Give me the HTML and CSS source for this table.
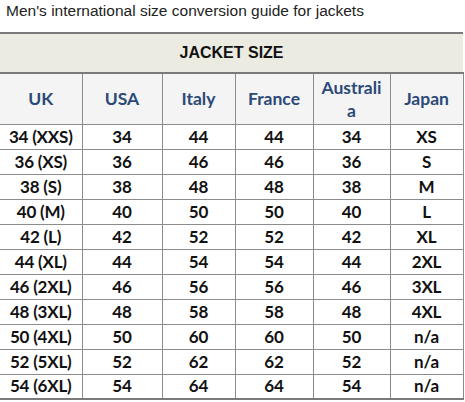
FILE: index.html
```html
<!DOCTYPE html>
<html>
<head>
<meta charset="utf-8">
<link rel="stylesheet" href="styles.css">
</head>
<body>
<p class="title">Men's international size conversion guide for jackets</p>
<table class="size-table">
  <colgroup>
    <col class="c1"><col class="c2"><col class="c3"><col class="c4"><col class="c5"><col class="c6">
  </colgroup>
  <thead>
    <tr class="head-main"><th colspan="6">JACKET SIZE</th></tr>
    <tr class="head-cols">
      <th>UK</th><th>USA</th><th>Italy</th><th>France</th><th>Australi<br>a</th><th>Japan</th>
    </tr>
  </thead>
  <tbody>
    <tr><td>34 (XXS)</td><td>34</td><td>44</td><td>44</td><td>34</td><td>XS</td></tr>
    <tr><td>36 (XS)</td><td>36</td><td>46</td><td>46</td><td>36</td><td>S</td></tr>
    <tr><td>38 (S)</td><td>38</td><td>48</td><td>48</td><td>38</td><td>M</td></tr>
    <tr><td>40 (M)</td><td>40</td><td>50</td><td>50</td><td>40</td><td>L</td></tr>
    <tr><td>42 (L)</td><td>42</td><td>52</td><td>52</td><td>42</td><td>XL</td></tr>
    <tr><td>44 (XL)</td><td>44</td><td>54</td><td>54</td><td>44</td><td>2XL</td></tr>
    <tr><td>46 (2XL)</td><td>46</td><td>56</td><td>56</td><td>46</td><td>3XL</td></tr>
    <tr><td>48 (3XL)</td><td>48</td><td>58</td><td>58</td><td>48</td><td>4XL</td></tr>
    <tr><td>50 (4XL)</td><td>50</td><td>60</td><td>60</td><td>50</td><td>n/a</td></tr>
    <tr><td>52 (5XL)</td><td>52</td><td>62</td><td>62</td><td>52</td><td>n/a</td></tr>
    <tr><td>54 (6XL)</td><td>54</td><td>64</td><td>64</td><td>54</td><td>n/a</td></tr>
  </tbody>
</table>
</body>
</html>
```
FILE: styles.css
```css
html, body {
  margin: 0;
  padding: 0;
  background: #ffffff;
}
.title {
  margin: 0;
  padding: 2px 0 0 6px;
  height: 29px;
  box-sizing: border-box;
  font-family: "Liberation Sans", Arial, sans-serif;
  font-size: 15.5px;
  color: #222222;
}
.size-table {
  border-collapse: collapse;
  table-layout: fixed;
  width: 463px;
  margin-top: 3px;
  font-family: Lato, "Open Sans", sans-serif;
  font-weight: bold;
  color: #111111;
}
.c1 { width: 82px; }
.c2 { width: 80px; }
.c3 { width: 73px; }
.c4 { width: 78px; }
.c5 { width: 77px; }
.c6 { width: 73px; }
.size-table th,
.size-table td {
  padding: 0;
  text-align: center;
  border: 1px solid #8c8c8c;
  box-sizing: border-box;
}
.head-main th {
  height: 40px;
  background: #ecebe2;
  border-top: 2px solid #7a7a7a;
  border-bottom: 2px solid #7a7a7a;
  border-left: 0;
  border-right: 0;
  font-family: "Liberation Sans", Arial, sans-serif;
  font-size: 16px;
  color: #111111;
}
.head-cols th {
  height: 51px;
  background: #f4f4f4;
  color: #2b4a78;
  font-size: 17.5px;
  line-height: 23px;
}
.size-table tbody td {
  height: 25px;
  font-size: 17px;
  line-height: 20px;
  letter-spacing: -0.2px;
}
.size-table tr > :first-child {
  border-left: 0;
}
.size-table tbody tr:last-child td {
  border-bottom: 2px solid #7a7a7a;
}
```
